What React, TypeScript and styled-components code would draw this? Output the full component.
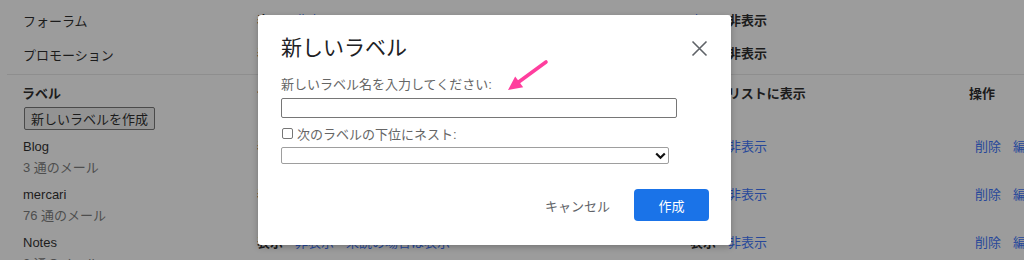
import React from 'react';
import styled, {createGlobalStyle} from 'styled-components';

// the page behind the modal is drawn in its dimmed colours directly
const dim = {
    bg: 'rgb(156, 156, 156)',
    text: 'rgb(28, 28, 28)',
    muted: 'rgb(78, 78, 78)',
    link: 'rgb(39, 72, 154)',
    line: 'rgb(142, 142, 142)',
    buttonBg: 'rgb(147, 147, 147)',
    buttonBorder: 'rgb(74, 74, 74)',
}

const GlobalStyle = createGlobalStyle`
  html, body {
    margin: 0;
    padding: 0;
    overflow: hidden;
    background: rgb(156, 156, 156);
  }

  body {
    font-family: "Liberation Sans", "Noto Sans CJK JP", sans-serif;
    font-size: 13px;
    color: ${dim.text};
  }
`

const fontStack = `"Liberation Sans", "Noto Sans CJK JP", sans-serif`

type LabelRowType = {
    name: string
    count: string
}

const labels: LabelRowType[] = [
    {name: 'Blog', count: '3 通のメール'},
    {name: 'mercari', count: '76 通のメール'},
    {name: 'Notes', count: '2 通のメール'},
]

const categories = ['フォーラム', 'プロモーション']

export default function App() {
    return (
        <Screen>
            <GlobalStyle/>
            <Page>
                {categories.map(c => (
                    <CategoryRow key={c}>
                        <NameCell>{c}</NameCell>
                        <Cell>
                            <Current>表示</Current>
                            <Action>非表示</Action>
                        </Cell>
                        <Cell>
                            <Action>表示</Action>
                            <Current>非表示</Current>
                        </Cell>
                        <Cell/>
                    </CategoryRow>
                ))}

                <HeaderRow>
                    <HeadCell>ラベル</HeadCell>
                    <HeadCell>ラベルリストに表示</HeadCell>
                    <HeadCell $shift={-26}>メッセージリストに表示</HeadCell>
                    <HeadCell>操作</HeadCell>
                </HeaderRow>

                <CreateRow>
                    <CreateButton>新しいラベルを作成</CreateButton>
                </CreateRow>

                {labels.map(l => (
                    <LabelRow key={l.name}>
                        <NameCell>
                            <LabelName>{l.name}</LabelName>
                            <Count>{l.count}</Count>
                        </NameCell>
                        <Cell>
                            <Current>表示</Current>
                            <Action>非表示</Action>
                            <Action>未読の場合は表示</Action>
                        </Cell>
                        <Cell>
                            <Current>表示</Current>
                            <Action>非表示</Action>
                        </Cell>
                        <Cell $pad={5}>
                            <Action>削除</Action>
                            <Action>編集</Action>
                        </Cell>
                    </LabelRow>
                ))}
            </Page>

            <Dialog>
                <DialogHeader>
                    <DialogTitle>新しいラベル</DialogTitle>
                    <CloseButton aria-label="閉じる">
                        <svg width="17" height="17" viewBox="0 0 17 17">
                            <path d="M1.5 1.5 L15.5 15.5 M15.5 1.5 L1.5 15.5"
                                  stroke="#5f6368" strokeWidth="1.6" fill="none"/>
                        </svg>
                    </CloseButton>
                </DialogHeader>

                <FieldLabel>新しいラベル名を入力してください:</FieldLabel>
                <NameInput type="text"/>

                <NestRow>
                    <Check type="checkbox"/>
                    <span>次のラベルの下位にネスト:</span>
                </NestRow>

                <SelectWrapper>
                    <ParentSelect disabled/>
                    <Chevron width="11" height="8" viewBox="0 0 11 8">
                        <path d="M1.2 1.5 L5.5 5.8 L9.8 1.5" stroke="#111" strokeWidth="2.2" fill="none"/>
                    </Chevron>
                </SelectWrapper>

                <Footer>
                    <CancelButton>キャンセル</CancelButton>
                    <PrimaryButton>作成</PrimaryButton>
                </Footer>

                <Arrow width="50" height="40" viewBox="0 0 50 40">
                    <path d="M45 5 L17 25.5" stroke="#ff3e9e" strokeWidth="3.6" strokeLinecap="round" fill="none"/>
                    <polygon points="7,33 14.2,19.4 22.2,30.2" fill="#ff3e9e"/>
                </Arrow>
            </Dialog>
        </Screen>
    );
}

const Screen = styled.div`
  position: relative;
  width: 1024px;
  height: 260px;
  overflow: hidden;
  background: ${dim.bg};
`

const Page = styled.div`
  padding: 3px 0 0 7px;
  width: 1017px;
  font-family: ${fontStack};
`

const gridColumns = `grid-template-columns: 234px 433px 280px 1fr;`

const CategoryRow = styled.div`
  display: grid;
  ${gridColumns};
  height: 35px;
  align-items: center;
  padding-left: 16px;

  &:nth-child(2) {
    border-bottom: 1px solid ${dim.line};
    height: 37px;
    align-items: start;
    padding-top: 7px;
    box-sizing: border-box;
  }
`

const HeaderRow = styled.div`
  display: grid;
  ${gridColumns};
  padding: 7px 0 0 15px;
  height: 20px;
  align-items: center;
`

const HeadCell = styled.div<{ $shift?: number }>`
  font-weight: bold;
  font-size: 13px;
  white-space: nowrap;
  margin-left: ${props => props.$shift || 0}px;
`

const CreateRow = styled.div`
  padding: 5px 0 0 17px;
`

const CreateButton = styled.button`
  font-family: ${fontStack};
  font-size: 13px;
  color: ${dim.text};
  background: ${dim.buttonBg};
  border: 1px solid ${dim.buttonBorder};
  border-radius: 2px;
  height: 23px;
  padding: 0 6px;
`

const LabelRow = styled.div`
  display: grid;
  ${gridColumns};
  align-items: start;
  padding: 8px 0 5px 16px;
  height: 35px;
`

const NameCell = styled.div`
  display: flex;
  flex-direction: column;
  gap: 4px;
  white-space: nowrap;
`

const LabelName = styled.span`
  line-height: 17px;
`

const Count = styled.span`
  color: ${dim.muted};
  line-height: 17px;
`

const Cell = styled.div<{ $pad?: number }>`
  display: flex;
  gap: 12px;
  white-space: nowrap;
  line-height: 17px;
  padding-left: ${props => props.$pad || 0}px;
`

const Current = styled.span`
  font-weight: bold;
  color: ${dim.text};
`

const Action = styled.span`
  color: ${dim.link};
`

const Dialog = styled.div`
  position: absolute;
  z-index: 20;
  left: 258px;
  top: 15px;
  width: 473px;
  height: 230px;
  box-sizing: border-box;
  padding: 20px 22px 24px 23px;
  background: #ffffff;
  border-radius: 3px;
  box-shadow: 0 2px 6px rgba(0, 0, 0, 0.25);
  display: flex;
  flex-direction: column;
  font-family: ${fontStack};
`

const DialogHeader = styled.div`
  display: flex;
  justify-content: space-between;
  align-items: center;
  height: 26px;
`

const DialogTitle = styled.h2`
  margin: 0;
  font-size: 21px;
  font-weight: normal;
  color: #202124;
  line-height: 26px;
`

const CloseButton = styled.button`
  border: none;
  background: none;
  padding: 0;
  margin-right: 1px;
  width: 17px;
  height: 17px;
  display: flex;
`

const FieldLabel = styled.div`
  margin-top: 15px;
  font-size: 13px;
  line-height: 18px;
  color: #666666;
`

const NameInput = styled.input`
  margin-top: 4px;
  width: 396px;
  height: 20px;
  box-sizing: border-box;
  border: 1px solid #767676;
  border-radius: 2px;
  padding: 0 4px;
  font-family: ${fontStack};
`

const NestRow = styled.label`
  display: flex;
  align-items: center;
  margin-top: 6px;
  height: 18px;
  font-size: 13px;
  color: #666666;
`

const Check = styled.input`
  appearance: none;
  width: 11px;
  height: 11px;
  margin: 0 4px 0 1px;
  border: 1px solid #767676;
  border-radius: 2px;
  background: #ffffff;
`

const SelectWrapper = styled.div`
  position: relative;
  margin-top: 5px;
  width: 388px;
  height: 17px;
`

const ParentSelect = styled.select`
  appearance: none;
  width: 100%;
  height: 100%;
  box-sizing: border-box;
  border: 1px solid #767676;
  border-radius: 2px;
  background: #ffffff;
  display: block;
`

const Chevron = styled.svg`
  position: absolute;
  right: 3px;
  top: 5px;
`

const Footer = styled.div`
  margin-top: auto;
  display: flex;
  justify-content: flex-end;
  align-items: center;
  gap: 12px;
`

const CancelButton = styled.button`
  border: none;
  background: none;
  font-family: ${fontStack};
  font-size: 13px;
  color: #5f6368;
  height: 32px;
  padding: 0 12px;
`

const PrimaryButton = styled.button`
  border: none;
  border-radius: 4px;
  background: #1a73e8;
  color: #ffffff;
  font-family: ${fontStack};
  font-size: 13px;
  width: 75px;
  height: 32px;
`

const Arrow = styled.svg`
  position: absolute;
  left: 243px;
  top: 42px;
  overflow: visible;
`
